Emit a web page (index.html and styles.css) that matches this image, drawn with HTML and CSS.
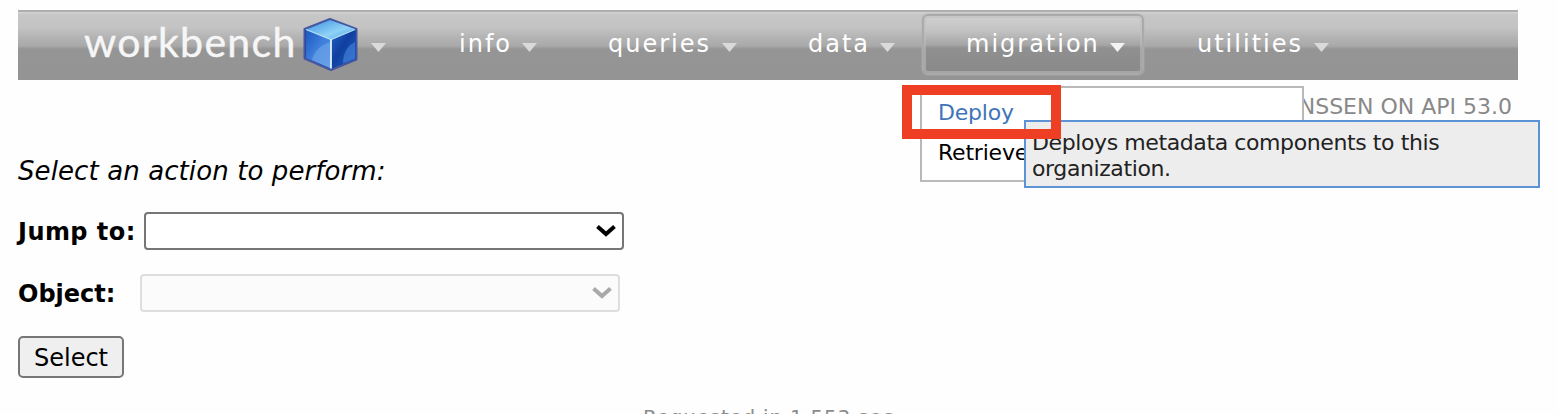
FILE: index.html
```html
<!DOCTYPE html>
<html lang="en">
<head>
<meta charset="utf-8">
<title>Workbench</title>
<link rel="stylesheet" href="styles.css">
</head>
<body>
<nav class="bar">
  <a class="item brand"><span class="wordmark">workbench</span>
    <svg class="cube" width="58" height="56" viewBox="0 0 58 56">
      <defs>
        <linearGradient id="top" x1="0" y1="0" x2="1" y2="1"><stop offset="0" stop-color="#3a8fe0"/><stop offset=".6" stop-color="#8fd2f6"/><stop offset="1" stop-color="#4a9fe8"/></linearGradient>
        <linearGradient id="left" x1="0" y1="0" x2="1" y2="1"><stop offset="0" stop-color="#1c58c0"/><stop offset=".5" stop-color="#3f80dc"/><stop offset="1" stop-color="#5292e4"/></linearGradient>
        <linearGradient id="right" x1="0" y1="0" x2="1" y2="1"><stop offset="0" stop-color="#2364c8"/><stop offset=".45" stop-color="#0f3f9f"/><stop offset="1" stop-color="#2360c4"/></linearGradient>
      </defs>
      <path d="M28 2 L54.500 12 L54.500 42.500 L29 53 L2.500 41.500 L2.500 12Z" fill="#1d3b94" stroke="#4656a0" stroke-width="2" stroke-linejoin="round"/>
      <path d="M28 3 L53 12 L29 22.500 L4 12.500Z" fill="url(#top)"/>
      <path d="M4 13 L29 23 L29 51.500 L4 41Z" fill="url(#left)"/>
      <path d="M29 23 L53.500 13 L53.500 42 L29 51.500Z" fill="url(#right)"/>
      <path d="M10 43 Q13 30 28 25 L28 51Z" fill="#8db8ef" opacity=".4"/>
      <path d="M41 46.500 Q41 31 53 25 L53 41.500Z" fill="#4f92e6" opacity=".5"/>
      <path d="M4 12.500 L29 22.500 L53 12.500" fill="none" stroke="#b4e4fb" stroke-width="1.200"/>
      <path d="M29 22.500 L29 51.500" stroke="#e2f3fd" stroke-width="1.800"/>
    </svg>
    <svg class="arrow" width="15" height="9" viewBox="0 0 15 9"><path d="M0 0H15L7.500 9Z"/></svg></a>
  <a class="item info"><span>info</span><svg class="arrow" width="15" height="9" viewBox="0 0 15 9"><path d="M0 0H15L7.500 9Z"/></svg></a>
  <a class="item queries"><span>queries</span><svg class="arrow" width="15" height="9" viewBox="0 0 15 9"><path d="M0 0H15L7.500 9Z"/></svg></a>
  <a class="item data"><span>data</span><svg class="arrow" width="15" height="9" viewBox="0 0 15 9"><path d="M0 0H15L7.500 9Z"/></svg></a>
  <a class="item migration"><span>migration</span><svg class="arrow" width="15" height="9" viewBox="0 0 15 9"><path d="M0 0H15L7.500 9Z"/></svg></a>
  <a class="item utilities"><span>utilities</span><svg class="arrow" width="15" height="9" viewBox="0 0 15 9"><path d="M0 0H15L7.500 9Z"/></svg></a>
</nav>
<div class="session">NSSEN ON API 53.0</div>
<main>
  <p class="prompt">Select an action to perform:</p>
  <div class="row"><label class="jump">Jump to:</label>
    <div class="select"><svg width="20" height="14" viewBox="0 0 20 14"><path d="M1.500 2.500 L10 10 L18.500 2.500"/></svg></div></div>
  <div class="row second"><label class="object">Object:</label>
    <div class="select off"><svg width="20" height="14" viewBox="0 0 20 14"><path d="M1.500 2.500 L10 10 L18.500 2.500"/></svg></div></div>
  <button class="go">Select</button>
</main>
<footer>Requested in 1.553 sec</footer>
<div class="menu"><a class="active">Deploy</a><a>Retrieve</a></div>
<div class="tooltip">Deploys metadata components to this<br>organization.</div>
<div class="marker"></div>
</body>
</html>
```
FILE: styles.css
```css
*, *::before { box-sizing: border-box; }
body {
  margin: 0;
  padding: 10px 18px 0;
  height: 414px;
  position: relative;
  overflow: hidden;
  background: #fefefe;
  color: #000;
  font-family: Verdana, "DejaVu Sans", sans-serif;
}
.bar {
  display: flex;
  width: 1500px;
  height: 70px;
  background: linear-gradient(#aaa 0, #b2b2b2 2px, #d0d0d0 2.5px, #c6c6c6 5px, #c3c3c3 18px, #b4b4b4 27px, #a9a9a9 36px, #959595 39px, #949494 70px);
}
.item {
  display: flex;
  align-items: center;
  height: 70px;
  padding: 0 27px 2px 44px;
  color: #fff;
  font-size: 24px;
  letter-spacing: 2px;
  white-space: nowrap;
}
.arrow { margin: 6px 0 0 auto; fill: #dadada; flex: none; }
.brand { width: 397px; padding-left: 66px; }
.wordmark {
  font-family: Lato, sans-serif;
  font-size: 41px;
  letter-spacing: 1.3px;
  width: 218px;
  padding-bottom: 5px;
  color: #f6f6f6;
  -webkit-text-stroke: .4px #f6f6f6;
}
.cube { flex: none; margin-top: 1px; }
.brand .arrow { margin: 6px 0 0 11px; }
.info { width: 149px; }
.queries { width: 200px; }
.data { width: 158px; }
.utilities { width: 203px; }
.migration { width: 231px; position: relative; }
.migration::before {
  content: "";
  position: absolute;
  left: 0;
  top: 4px;
  width: 222px;
  height: 61px;
  border: 2px solid #aaa;
  border-radius: 6px;
  box-shadow: inset 0 0 0 2px rgba(190,190,190,.55), 0 0 0 1px rgba(180,180,180,.3);
  background: linear-gradient(#d0d0d0, #c4c4c4 14px, #a5a5a5 29px, #909090 32px, #898989);
}
.migration span, .migration svg { position: relative; }
.migration .arrow { fill: #f3f3f3; margin-right: 1px; }
.session {
  width: 1494px;
  height: 52px;
  line-height: 54px;
  text-align: right;
  font-size: 22px;
  color: #888;
}
.prompt { margin: 22px 0 0; height: 34px; line-height: 34px; font-size: 26px; font-style: italic; letter-spacing: .1px; }
.row { display: flex; align-items: center; height: 38px; margin-top: 24px; font-size: 24px; font-weight: bold; }
.row label { padding-top: 2px; }
.jump { width: 126px; letter-spacing: .45px; }
.object { width: 122px; }
.select {
  display: flex;
  align-items: center;
  justify-content: flex-end;
  width: 480px;
  height: 38px;
  border: 2px solid #767676;
  border-radius: 4px;
  padding-right: 6px;
  background: #fff;
}
.select svg { fill: none; stroke: #000; stroke-width: 4; }
.off { border-color: #dedede; background: #fbfbfb; }
.off svg { stroke: #a9a9a9; }
.go {
  display: block;
  width: 106px;
  height: 42px;
  margin-top: 24px;
  padding: 2px 0 0;
  border: 2px solid #767676;
  border-radius: 5px;
  background: #efefef;
  color: #000;
  font: 24px/36px Verdana, "DejaVu Sans", sans-serif;
}
footer { margin: 28px 0 0 625px; font-size: 20px; line-height: 23px; color: #8c8c8c; letter-spacing: .75px; white-space: nowrap; }
.menu {
  position: absolute;
  left: 920px;
  top: 86px;
  width: 384px;
  height: 96px;
  padding: 5px 16px;
  border: 2px solid #b9b9b9;
  background: #fff;
  font-size: 22px;
  letter-spacing: -.2px;
}
.menu a { display: block; height: 40px; line-height: 40px; }
.menu .active { color: #3f75b8; }
.tooltip {
  position: absolute;
  left: 1024px;
  top: 120px;
  width: 516px;
  height: 68px;
  padding: 8px 6px;
  border: 2px solid #5b93d6;
  background: #ededed;
  color: #222;
  font-size: 22px;
  line-height: 26px;
  letter-spacing: -.4px;
  white-space: nowrap;
}
.marker { position: absolute; left: 902px; top: 85px; width: 159px; height: 54px; border: 10px solid #ee3f24; }
```
